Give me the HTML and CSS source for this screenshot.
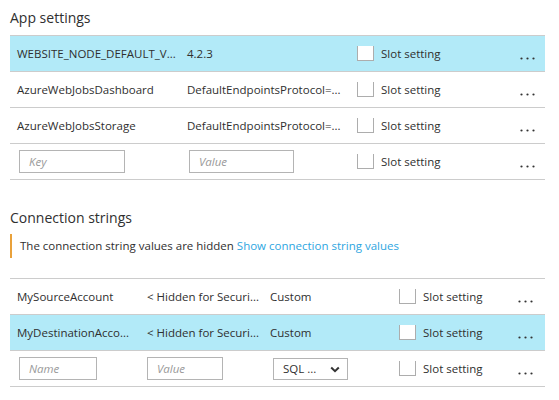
FILE: index.html
```html
<!DOCTYPE html>
<html>
<head>
<meta charset="utf-8">
<link rel="stylesheet" href="styles.css">
</head>
<body>
<div class="page">
  <h2 class="section-title first">App settings</h2>
  <div class="table app">
    <div class="row selected">
      <div class="cell key">WEBSITE_NODE_DEFAULT_V...</div>
      <div class="cell val">4.2.3</div>
      <div class="cell slot"><span class="cb"></span><span>Slot setting</span></div>
      <div class="cell more"><svg width="15" height="3" viewBox="0 0 15 3"><circle cx="1.5" cy="1.5" r="1.1"/><circle cx="7.5" cy="1.5" r="1.1"/><circle cx="13.5" cy="1.5" r="1.1"/></svg></div>
    </div>
    <div class="row">
      <div class="cell key">AzureWebJobsDashboard</div>
      <div class="cell val">DefaultEndpointsProtocol=...</div>
      <div class="cell slot"><span class="cb"></span><span>Slot setting</span></div>
      <div class="cell more"><svg width="15" height="3" viewBox="0 0 15 3"><circle cx="1.5" cy="1.5" r="1.1"/><circle cx="7.5" cy="1.5" r="1.1"/><circle cx="13.5" cy="1.5" r="1.1"/></svg></div>
    </div>
    <div class="row">
      <div class="cell key">AzureWebJobsStorage</div>
      <div class="cell val">DefaultEndpointsProtocol=...</div>
      <div class="cell slot"><span class="cb"></span><span>Slot setting</span></div>
      <div class="cell more"><svg width="15" height="3" viewBox="0 0 15 3"><circle cx="1.5" cy="1.5" r="1.1"/><circle cx="7.5" cy="1.5" r="1.1"/><circle cx="13.5" cy="1.5" r="1.1"/></svg></div>
    </div>
    <div class="row">
      <div class="cell key"><span class="input in-key">Key</span></div>
      <div class="cell val"><span class="input in-val">Value</span></div>
      <div class="cell slot"><span class="cb"></span><span>Slot setting</span></div>
      <div class="cell more"><svg width="15" height="3" viewBox="0 0 15 3"><circle cx="1.5" cy="1.5" r="1.1"/><circle cx="7.5" cy="1.5" r="1.1"/><circle cx="13.5" cy="1.5" r="1.1"/></svg></div>
    </div>
  </div>

  <h2 class="section-title second">Connection strings</h2>
  <div class="info">The connection string values are hidden <a class="link">Show connection string values</a></div>

  <div class="table conn">
    <div class="row">
      <div class="cell name">MySourceAccount</div>
      <div class="cell cval">&lt; Hidden for Securi...</div>
      <div class="cell type">Custom</div>
      <div class="cell slot"><span class="cb"></span><span>Slot setting</span></div>
      <div class="cell more"><svg width="15" height="3" viewBox="0 0 15 3"><circle cx="1.5" cy="1.5" r="1.1"/><circle cx="7.5" cy="1.5" r="1.1"/><circle cx="13.5" cy="1.5" r="1.1"/></svg></div>
    </div>
    <div class="row selected">
      <div class="cell name">MyDestinationAcco...</div>
      <div class="cell cval">&lt; Hidden for Securi...</div>
      <div class="cell type">Custom</div>
      <div class="cell slot"><span class="cb"></span><span>Slot setting</span></div>
      <div class="cell more"><svg width="15" height="3" viewBox="0 0 15 3"><circle cx="1.5" cy="1.5" r="1.1"/><circle cx="7.5" cy="1.5" r="1.1"/><circle cx="13.5" cy="1.5" r="1.1"/></svg></div>
    </div>
    <div class="row">
      <div class="cell name"><span class="input in-name">Name</span></div>
      <div class="cell cval"><span class="input in-cval">Value</span></div>
      <div class="cell type"><span class="select">SQL ...<svg class="chev" width="10" height="7" viewBox="0 0 10 7"><path d="M1.2 1.5 L5 5.2 L8.8 1.5" fill="none" stroke="#333" stroke-width="2"/></svg></span></div>
      <div class="cell slot"><span class="cb"></span><span>Slot setting</span></div>
      <div class="cell more"><svg width="15" height="3" viewBox="0 0 15 3"><circle cx="1.5" cy="1.5" r="1.1"/><circle cx="7.5" cy="1.5" r="1.1"/><circle cx="13.5" cy="1.5" r="1.1"/></svg></div>
    </div>
  </div>
</div>
</body>
</html>
```

FILE: styles.css
```css
* { box-sizing: border-box; }
html, body { margin: 0; padding: 0; background: #fff; }
body {
  font-family: "Open Sans", "Noto Sans", sans-serif;
  font-size: 11.5px;
  color: #2f2f2f;
}
.page { padding: 0 14px 0 10px; }
.section-title {
  margin: 0;
  font-weight: normal;
  font-size: 14px;
  line-height: 20px;
  color: #2f2f2f;
}
.section-title.first { padding-top: 8px; margin-bottom: 7px; }
.section-title.second { margin-top: 28px; margin-bottom: 6px; }
.table { border-top: 1px solid #ccc; }
.row {
  display: grid;
  height: 36px;
  border-bottom: 1px solid #ccc;
  align-items: center;
}
.row.selected { background: #b2eaf8; }
.app .row { grid-template-columns: 170px 170px 163px 1fr; }
.conn .row { grid-template-columns: 130px 123px 129px 126px 1fr; }
.conn { margin-top: 20px; }
.cell { padding-left: 7px; white-space: nowrap; overflow: hidden; }
.slot { display: flex; align-items: center; gap: 7px; }
.cb {
  display: inline-block;
  width: 17px;
  height: 17px;
  border: 1px solid #adadad;
  background: #fff;
  margin-top: -2px;
}
.more { padding-left: 7px; padding-top: 9px; line-height: 0; }
.more svg { fill: #333; }
.conn .more { padding-left: 0; }
.input {
  display: inline-block;
  height: 23px;
  line-height: 21px;
  border: 1px solid #b4b4b4;
  background: #fff;
  color: #999;
  font-style: italic;
  padding-left: 9px;
  margin-left: 2px;
  vertical-align: middle;
}
.in-key { width: 106px; }
.in-val { width: 105px; }
.in-name { width: 78px; }
.in-cval { width: 76px; margin-left: 0; }
.select {
  display: inline-flex;
  align-items: center;
  justify-content: space-between;
  width: 75px;
  height: 22px;
  border: 1px solid #b4b4b4;
  padding: 0 7px 0 9px;
  margin-left: 3px;
  color: #2f2f2f;
  background: #fff;
}
.chev { margin-top: 1px; }
.info {
  border-left: 2px solid #e9a13b;
  height: 24px;
  line-height: 24px;
  padding-left: 8px;
}
.link { color: #2ea6df; }
```
